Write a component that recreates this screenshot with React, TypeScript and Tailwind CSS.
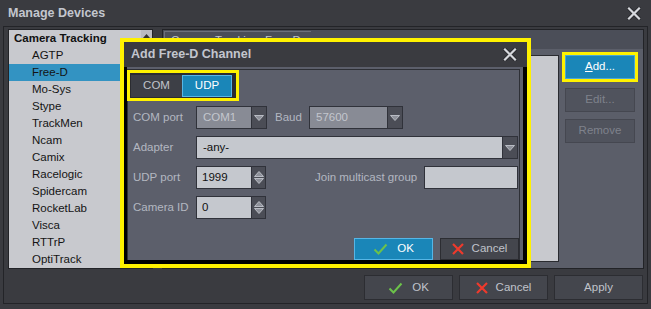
import React from 'react';

const items = ['AGTP', 'Free-D', 'Mo-Sys', 'Stype', 'TrackMen', 'Ncam', 'Camix', 'Racelogic', 'Spidercam', 'RocketLab', 'Visca', 'RTTrP', 'OptiTrack'];

function CloseX() {
  return (
    <svg width="14" height="13" viewBox="0 0 14 13">
      <path d="M2 1.5 L12 11.5 M12 1.5 L2 11.5" stroke="#2a2b2f" strokeWidth="4" strokeLinecap="square" />
      <path d="M2 1.5 L12 11.5 M12 1.5 L2 11.5" stroke="#d6d8dd" strokeWidth="2.2" strokeLinecap="square" />
    </svg>
  );
}

function Check() {
  return (
    <svg width="15" height="12" viewBox="0 0 15 12">
      <path d="M1.5 6.5 L5.5 10.5 L13.5 1.5" stroke="#6cc24a" strokeWidth="2" fill="none" />
    </svg>
  );
}

function RedX() {
  return (
    <svg width="12" height="12" viewBox="0 0 12 12">
      <path d="M1 1 L11 11 M11 1 L1 11" stroke="#ee3a2c" strokeWidth="2.2" />
    </svg>
  );
}

function Down() {
  return (
    <svg width="10" height="6" viewBox="0 0 10 6">
      <path d="M0.5 0.5 L9.5 0.5 L5 5.5 Z" fill="#8e919a" stroke="#b9bcc4" strokeWidth="1" />
    </svg>
  );
}

function Up() {
  return (
    <svg width="10" height="6" viewBox="0 0 10 6">
      <path d="M0.5 5.5 L9.5 5.5 L5 0.5 Z" fill="#8e919a" stroke="#b9bcc4" strokeWidth="1" />
    </svg>
  );
}

function Combo({ value, w, disabled }: { value: string; w: string; disabled?: boolean }) {
  return (
    <div className={`${w} h-[23px] flex border border-[#30323a] ${disabled ? 'bg-[#888b95] text-[#c3c6cd]' : 'bg-[#c5c8ce] text-[#111]'}`}>
      <div className="flex-1 flex items-center pl-[6px]">{value}</div>
      <div className="w-[15px] bg-[#4b4d56] border-l border-[#30323a] flex items-center justify-center">
        <Down />
      </div>
    </div>
  );
}

function Spin({ value }: { value: string }) {
  return (
    <div className="w-[70px] h-[23px] flex border border-[#30323a] bg-[#c5c8ce] text-[#111]">
      <div className="flex-1 flex items-center pl-[5px]">{value}</div>
      <div className="w-[14px] bg-[#4b4d56] border-l border-[#30323a] flex flex-col items-center justify-center gap-[1px]">
        <Up />
        <Down />
      </div>
    </div>
  );
}

export default function App() {
  return (
    <div className="relative w-[651px] h-[309px] overflow-hidden bg-[#3a3b40] font-['Liberation_Sans',Arial,sans-serif] text-[11.5px] flex flex-col">
      <div className="h-[26px] flex items-center justify-between pl-[8px] pr-[10px]">
        <span className="text-[12.5px] font-bold text-[#c3c6ce]">Manage Devices</span>
        <CloseX />
      </div>

      <div className="ml-[3px] w-[645px] h-[278px] border border-[#232428] flex flex-col">
        <div className="flex gap-[9px] pl-[4px] pt-[2px]">
          {/* device list */}
          <div className="w-[145px] h-[240px] border border-[#222327] bg-[#c8c9ce] flex">
            <div className="flex-1 flex flex-col">
              <div className="h-[17px] flex items-center pl-[5px] font-bold text-[#111]">Camera Tracking</div>
              {items.map((it) => (
                <div
                  key={it}
                  className={`h-[17px] flex items-center pl-[23px] text-[#141414] ${it === 'Free-D' ? 'bg-[#3393c2]' : ''}`}
                >
                  {it}
                </div>
              ))}
            </div>
            <div className="w-[11px] flex flex-col">
              <div className="h-[11px] bg-[#b9bac0] flex items-center justify-center">
                <svg width="7" height="4" viewBox="0 0 7 4">
                  <path d="M0 4 L3.5 0 L7 4 Z" fill="#333" />
                </svg>
              </div>
            </div>
          </div>

          {/* right panel */}
          <div className="w-[482px] h-[240px] border border-[#222327] bg-[#5b5e69] flex flex-col">
            <div className="h-[19px] bg-[#4b4e58] flex items-end pl-[1px]">
              <div className="h-[18px] border-l border-t border-[#6d707b] pl-[6px] pr-[10px] flex items-center text-[#c0c3cb]">
                Camera Tracking: Free-D
              </div>
            </div>
            <div className="flex pt-[6px] pl-[6px] pr-[8px] gap-[6px]">
              <div className="flex-1 h-[207px] bg-[#c8c9ce] border border-[#2a2b30]" />
              <div className="w-[70px] flex flex-col">
                <div className="h-[24px] bg-[#1a86b8] border border-[#4aa6d6] text-white flex items-center justify-center outline-[3px] outline-[#fff200]">
                  <span><span className="underline">A</span>dd...</span>
                </div>
                <div className="mt-[9px] h-[24px] bg-[#50535d] border border-[#454750] text-[#7f828c] flex items-center justify-center">Edit...</div>
                <div className="mt-[7px] h-[24px] bg-[#50535d] border border-[#454750] text-[#7f828c] flex items-center justify-center">Remove</div>
              </div>
            </div>
          </div>
        </div>

        <div className="flex justify-end gap-[6px] pr-[4px] mt-[6px]">
          <div className="w-[89px] h-[25px] bg-[#44464d] border border-[#2c2d32] text-[#c0c3cb] flex items-center justify-center gap-[9px]">
            <Check />
            <span>OK</span>
          </div>
          <div className="w-[89px] h-[25px] bg-[#44464d] border border-[#2c2d32] text-[#c0c3cb] flex items-center justify-center gap-[8px]">
            <RedX />
            <span>Cancel</span>
          </div>
          <div className="w-[89px] h-[25px] bg-[#44464d] border border-[#2c2d32] text-[#c0c3cb] flex items-center justify-center">
            Apply
          </div>
        </div>
      </div>

      {/* Add Free-D Channel dialog */}
      <div className="absolute left-[120px] top-[38px] w-[411px] h-[230px] border-[4px] border-[#fff200] flex flex-col">
        <div className="h-[25px] shrink-0 bg-[#3a3b40] flex items-center justify-between pl-[7px] pr-[10px]">
          <span className="text-[12.5px] font-bold text-[#c3c6ce]">Add Free-D Channel</span>
          <CloseX />
        </div>
        <div className="flex-1 bg-[#5c5f6b] border-l-[3px] border-r-[4px] border-b-[4px] border-black pt-[2px] pr-[3px] flex flex-col">
          <div className="flex-1 border-l border-t border-r border-[#2e3036] flex flex-col text-[#b3b7c1]">
            <div className="-ml-[1px] w-[112px] h-[31px] border-[3px] border-[#fff200] bg-[#2b2c31] flex pl-[1px] pt-[2px] pb-[1px]">
              <div className="w-[51px] bg-[#3d3f46] flex items-center justify-center text-[#c0c3cb]">COM</div>
              <div className="w-[50px] bg-[#1a86b8] border border-[#56b6e6] flex items-center justify-center text-white">UDP</div>
            </div>

            <div className="mt-[5px] flex flex-col gap-[7px] pl-[5px]">
              <div className="flex items-center h-[23px]">
                <span className="w-[63px]">COM port</span>
                <Combo value="COM1" w="w-[71px]" disabled />
                <span className="ml-[8px] w-[34px]">Baud</span>
                <Combo value="57600" w="w-[94px]" disabled />
              </div>
              <div className="flex items-center h-[23px]">
                <span className="w-[63px]">Adapter</span>
                <Combo value="-any-" w="w-[322px]" />
              </div>
              <div className="flex items-center h-[23px]">
                <span className="w-[63px]">UDP port</span>
                <Spin value="1999" />
                <span className="ml-[49px] w-[109px]">Join multicast group</span>
                <div className="w-[94px] h-[23px] bg-[#c5c8ce] border border-[#30323a]" />
              </div>
              <div className="flex items-center h-[23px]">
                <span className="w-[63px]">Camera ID</span>
                <Spin value="0" />
              </div>
            </div>

            <div className="mt-auto flex justify-end gap-[7px]">
              <div className="w-[79px] h-[22px] bg-[#1a86b8] border border-[#56b6e6] text-white flex items-center justify-center gap-[9px]">
                <Check />
                <span>OK</span>
              </div>
              <div className="w-[79px] h-[22px] bg-[#44464d] border border-[#2c2d32] text-[#c0c3cb] flex items-center justify-center gap-[8px]">
                <RedX />
                <span>Cancel</span>
              </div>
            </div>
          </div>
        </div>
      </div>
    </div>
  );
}
